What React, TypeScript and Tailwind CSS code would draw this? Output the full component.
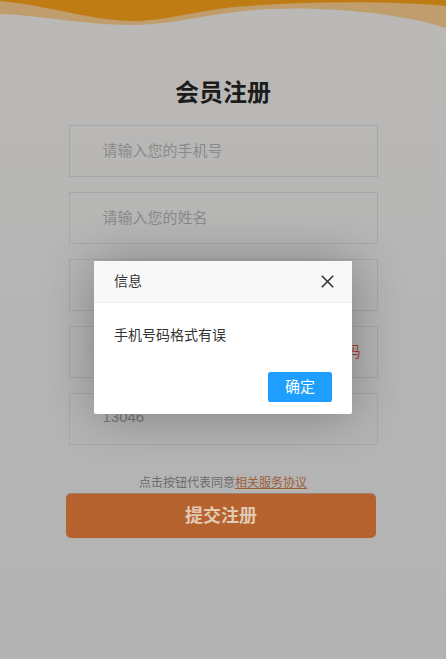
import React from "react";

const font = "font-['Liberation_Sans','Noto_Sans_CJK_SC',sans-serif]";

function Wave() {
  return (
    <svg className="block w-full h-[40px]" viewBox="0 0 446 40" preserveAspectRatio="none">
      <path
        d="M0,0 H446 V28 C410,16 340,6 270,9 C210,12 175,25 130,25 C85,25 40,15 0,14 Z"
        fill="#bf9d6c"
      />
      <path
        d="M0,0 H446 V6 C390,1 310,1 235,7 C195,11 165,21 132,21 C95,21 45,5 0,1 Z"
        fill="#c07c14"
      />
    </svg>
  );
}

function Field({ children }: { children?: React.ReactNode }) {
  return (
    <div className="h-[52px] border border-[#a7a7a7] flex items-center pl-[33px] pr-[16px] text-[15px]">
      {children}
    </div>
  );
}

export default function App() {
  return (
    <div className={`relative w-full h-[659px] overflow-hidden bg-linear-to-b from-[#bbb9b6] via-[#b5b5b5] to-[#b3b3b3] ${font}`}>
      <Wave />
      <h1 className="mt-[35px] text-center text-[24px] leading-[36px] font-bold text-[#1c1c1c]">会员注册</h1>
      <div className="mx-auto w-[309px] mt-[14px] flex flex-col gap-[15px]">
        <Field>
          <span className="text-[#8a8a8a]">请输入您的手机号</span>
        </Field>
        <Field>
          <span className="text-[#8a8a8a]">请输入您的姓名</span>
        </Field>
        <Field />
        <Field>
          <span className="flex-1" />
          <span className="text-[#b0413e]">获取验证码</span>
        </Field>
        <Field>
          <span className="text-[#7a7a7a] -mt-[3px]">13046</span>
        </Field>
      </div>
      <p className="mt-[30px] text-center text-[12px] leading-[16px] text-[#6b6b6b]">
        点击按钮代表同意<span className="text-[#9c5f3a] underline">相关服务协议</span>
      </p>
      <div className="mt-[3px] ml-[66px] w-[310px] h-[44px] rounded-[5px] bg-[#b5622f] flex items-center justify-center text-[18px] font-bold text-[#e2c9b2] shadow-[0_-1px_0_rgba(120,60,20,0.4)]">
        提交注册
      </div>

      {/* dialog */}
      <div className="absolute left-[94px] top-[261px] w-[258px] bg-white rounded-[2px] shadow-[1px_1px_50px_rgba(0,0,0,0.3)]">
        <div className="h-[42px] bg-[#f8f8f8] border-b border-[#eeeeee] flex items-center justify-between pl-[20px] pr-[18px] text-[14px] text-[#333]">
          <span>信息</span>
          <svg width="13" height="13" viewBox="0 0 13 13">
            <path d="M0.8,0.8 L12.2,12.2 M12.2,0.8 L0.8,12.2" stroke="#333" strokeWidth="1.6" fill="none" />
          </svg>
        </div>
        <div className="p-[20px] text-[14px] leading-[24px] text-[#333]">手机号码格式有误</div>
        <div className="flex justify-end px-[15px] pb-[12px]">
          <div className="mt-[5px] mr-[5px] h-[30px] px-[16px] rounded-[2px] bg-[#1e9fff] border border-[#1e9fff] text-white text-[15px] leading-[28px]">
            确定
          </div>
        </div>
      </div>
    </div>
  );
}
